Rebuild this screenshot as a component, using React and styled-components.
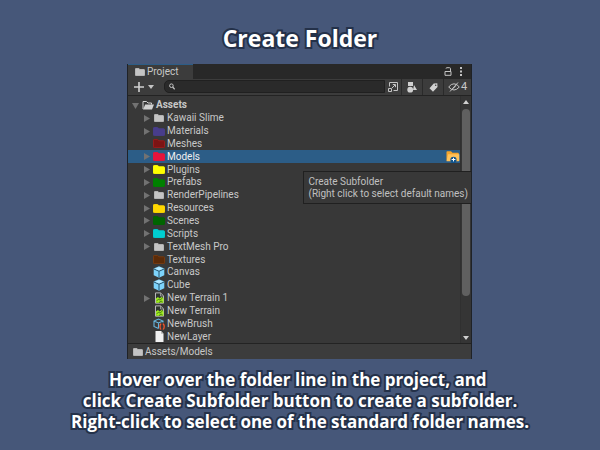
import React from "react";
import styled, { createGlobalStyle, css } from "styled-components";

const GlobalStyle = createGlobalStyle`
  * { box-sizing: border-box; }
  html, body { margin: 0; background: #465779; }
  button, input { font: inherit; color: inherit; margin: 0; padding: 0; border: 0; background: none; }
  ul { list-style: none; margin: 0; padding: 0; }
  svg { display: block; flex: none; }
`;

const outline = css`
  color: #fff;
  font-family: "Open Sans", "Noto Sans", sans-serif;
  font-weight: 700;
  text-align: center;
  -webkit-text-stroke: 4px #243149;
  paint-order: stroke fill;
`;

const Page = styled.main`
  display: flex;
  flex-direction: column;
  min-height: 100vh;
  padding: 22px 0 0;
`;

const Title = styled.h1`
  ${outline}
  margin: 0 0 9px;
  font-size: 23px;
  line-height: 33px;
`;

const Caption = styled.p`
  ${outline}
  margin: 10px 0 0;
  font-size: 17px;
  line-height: 21px;
`;

const Panel = styled.section`
  display: flex;
  flex-direction: column;
  margin: 0 128px 0 127px;
  border: solid #1f2226;
  border-width: 0 1px;
  background: #383838;
  color: #c8c8c8;
  font-family: Roboto, sans-serif;
  font-size: 10px;
  line-height: 12px;
`;

const TabBar = styled.header`
  display: flex;
  align-items: center;
  height: 15px;
  padding-right: 4px;
  background: #282828;
`;

const Tab = styled.button`
  display: flex;
  align-items: center;
  gap: 2px;
  width: 65px;
  height: 15px;
  padding-left: 7px;
  border-top: 1px solid #2c5d87;
  background: #3c3c3c;
`;

const Spacer = styled.span`
  flex: 1;
`;

const IconButton = styled.button`
  display: flex;
  align-items: center;
  justify-content: center;
  width: ${(p) => p.$width || 14}px;
  height: 12px;
`;

const Toolbar = styled.div`
  display: flex;
  align-items: stretch;
  height: 17px;
  border-bottom: 1px solid #232323;
  background: #3c3c3c;
`;

const AddButton = styled.button`
  display: flex;
  align-items: center;
  gap: 4px;
  width: 36px;
  padding-left: 6px;
`;

const SearchBox = styled.label`
  display: flex;
  align-items: center;
  flex: 1;
  height: 13px;
  margin-top: 1px;
  padding-left: 4px;
  border: 1px solid #202020;
  border-radius: 5px 0 0 5px;
  background: #2a2a2a;
`;

const SearchInput = styled.input`
  flex: 1;
  min-width: 0;
  height: 11px;
  outline: none;
`;

const ToolButton = styled.button`
  display: flex;
  align-items: center;
  justify-content: center;
  gap: 1px;
  width: ${(p) => p.$width}px;
  border-left: ${(p) => (p.$divided ? "1px solid #2a2a2a" : "0")};
`;

const Count = styled.span`
  font-size: 11px;
`;

const Body = styled.div`
  position: relative;
  display: flex;
  height: 247px;
`;

const Tree = styled.ul`
  flex: 1;
  display: grid;
  grid-auto-rows: 1fr;
  padding: 3px 0 0;
`;

const Row = styled.li`
  display: flex;
  align-items: center;
  padding: 0 0 0 ${(p) => (p.$root ? 3 : 14)}px;
  background: ${(p) => (p.$selected ? "#2c5d87" : "transparent")};
  color: ${(p) => (p.$selected ? "#f0f0f0" : "#c8c8c8")};
  font-weight: ${(p) => (p.$root ? 700 : 400)};
`;

const Toggle = styled.button`
  display: flex;
  align-items: center;
  justify-content: center;
  width: 9px;
  height: 11px;
`;

const Name = styled.span`
  flex: 1;
  margin-left: 2px;
  white-space: nowrap;
`;

const IconCell = styled.span`
  display: flex;
  align-items: center;
  justify-content: center;
  width: 12px;
  height: 12px;
  margin-left: 2px;
`;

const ScrollTrack = styled.div`
  display: flex;
  flex-direction: column;
  align-items: center;
  width: 11px;
  padding: 2px 0 2px;
  border-left: 1px solid #303030;
  background: #353535;
`;

const ScrollButton = styled.button`
  display: flex;
  align-items: center;
  justify-content: center;
  width: 9px;
  height: 7px;
`;

const Thumb = styled.div`
  width: 8px;
  height: 187px;
  margin: 4px 0 auto;
  border-radius: 4px;
  background: #606060;
`;

const Tooltip = styled.div`
  position: absolute;
  top: 75px;
  right: 0;
  padding: 4px 3px 3px 4px;
  border: 1px solid #202020;
  border-right: 0;
  background: #383838;
  color: #c0c0c0;
  line-height: 12px;
  white-space: nowrap;
`;

const Footer = styled.footer`
  display: flex;
  align-items: center;
  gap: 2px;
  height: 16px;
  padding-left: 5px;
  border-top: 1px solid #232323;
  background: #3c3c3c;
`;

const Folder = ({ color = "#c4c4c4", edge, size = 10 }) => (
  <svg width={size} height={size === 10 ? 8 : 9} viewBox="0 0 12 10" preserveAspectRatio="none">
    <path d="M.5 1.2Q.5.5 1.2.5H4.6L6 2h4.8q.7 0 .7.7v6.1q0 .7-.7.7H1.2q-.7 0-.7-.7z" fill={color} stroke={edge || color} />
  </svg>
);

const OpenFolder = () => (
  <svg width="12" height="10" viewBox="0 0 12 10">
    <path d="M1 9V1.5h3.5L6 3h3.5v1.5" fill="none" stroke="#d0d0d0" />
    <path d="M3.2 4.5H12L10 9.5H1z" fill="#d0d0d0" />
  </svg>
);

const Arrow = ({ open }) => (
  <svg width="7" height="7" viewBox="0 0 7 7">
    <path d={open ? "M0 1h7L3.5 7z" : "M1 0v7L7 3.5z"} fill="#727272" />
  </svg>
);

const Cube = () => (
  <svg width="12" height="12" viewBox="0 0 12 12">
    <path d="M6 .3 11.3 2.6V9.3L6 11.8.7 9.3V2.6z" fill="#7dd3fb" />
    <path d="M1 3 6 5.3 11 3M6 5.3V11.5" fill="none" stroke="#25526c" />
    <path d="M2 2.7 6 1l4 1.7-4 1.6z" fill="#b6e8ff" />
  </svg>
);

const Terrain = () => (
  <svg width="11" height="12" viewBox="0 0 11 12">
    <path d="M1.5 .9H6.5L9.5 3.8V11.2H1.5z" fill="#303630" stroke="#b7b7b7" />
    <path d="M6.5 1V4H9.5" fill="none" stroke="#b7b7b7" strokeWidth=".7" />
    <path d="M2 6.5 4 5l1.5 1.5L7.5 5 9.5 6v4.7H2z" fill="#a0f01c" />
    <path d="m2.5 8.8 2-1.4 1.5.6 2.5-2M5 10.6l2-1.6 1.5.8" fill="none" stroke="#294c16" strokeWidth=".7" />
  </svg>
);

const Brush = () => (
  <svg width="12" height="12" viewBox="0 0 12 12">
    <path d="M5.5 10.5 1 8.5V3L5.5 1 10 3v1.5M1 3l4.5 2L10 3M5.5 5v5.5" fill="none" stroke="#68b5dc" strokeWidth="1.1" />
    <path d="M8.2 6Q6.9 6.2 7 8.7q0 2.4 1.2 2.6M9.8 6q1.4.2 1.4 2.7 0 2.4-1.4 2.6" fill="none" stroke="#f4552c" strokeWidth="1.3" />
  </svg>
);

const Paper = () => (
  <svg width="9" height="11" viewBox="0 0 9 11">
    <path d="M.5 0H6L8.5 2.7V11H.5z" fill="#f1f1f1" />
    <path d="M6 0V2.7H8.5z" fill="#b9b9b9" />
  </svg>
);

const AddFolder = () => (
  <svg width="14" height="12" viewBox="0 0 14 12">
    <path d="M.5 1Q.5.3 1.3.3H5l1.5 1.4H12q.8 0 .8.8V9.3q0 .7-.8.7H1.3q-.8 0-.8-.7z" fill="#f5a52c" />
    <path d="M2 3.3H13.3V9.5q0 .8-.8.8H.6z" fill="#ffc35c" />
    <circle cx="7.5" cy="8.9" r="3.1" fill="#11548c" />
    <path d="M5.6 8.5h3.8M7.5 6.8v3.6" stroke="#fff" />
  </svg>
);

const glyphs = { cube: Cube, terrain: Terrain, brush: Brush, paper: Paper };

const items = [
  { name: "Kawaii Slime", arrow: true, small: true },
  { name: "Materials", arrow: true, color: "#483d8b" },
  { name: "Meshes", color: "#7c1414", edge: "#9c1a1a" },
  { name: "Models", arrow: true, color: "#e6143c", selected: true },
  { name: "Plugins", arrow: true, color: "#ffff00" },
  { name: "Prefabs", arrow: true, color: "#008000" },
  { name: "RenderPipelines", arrow: true, small: true },
  { name: "Resources", arrow: true, color: "#ffd700" },
  { name: "Scenes", arrow: true, color: "#006400" },
  { name: "Scripts", arrow: true, color: "#00ced1" },
  { name: "TextMesh Pro", arrow: true, small: true },
  { name: "Textures", color: "#5b2b08", edge: "#783b10" },
  { name: "Canvas", glyph: "cube" },
  { name: "Cube", glyph: "cube" },
  { name: "New Terrain 1", arrow: true, glyph: "terrain" },
  { name: "New Terrain", glyph: "terrain" },
  { name: "NewBrush", glyph: "brush" },
  { name: "NewLayer", glyph: "paper" },
];

function TreeItem({ item }) {
  const Glyph = glyphs[item.glyph];
  return (
    <Row role="treeitem" $selected={item.selected} aria-selected={!!item.selected}>
      {item.arrow ? (
        <Toggle aria-label={`Expand ${item.name}`}><Arrow /></Toggle>
      ) : (
        <Toggle as="span" />
      )}
      <IconCell>
        {Glyph ? <Glyph /> : <Folder color={item.color} edge={item.edge} size={item.small ? 10 : 12} />}
      </IconCell>
      <Name>{item.name}</Name>
      {item.selected && (
        <IconButton aria-label="Create Subfolder"><AddFolder /></IconButton>
      )}
    </Row>
  );
}

export default function App() {
  return (
    <>
      <GlobalStyle />
      <Page>
        <Title>Create Folder</Title>
        <Panel>
          <TabBar>
            <Tab><Folder />Project</Tab>
            <Spacer />
            <IconButton aria-label="Lock">
              <svg width="8" height="9" viewBox="0 0 8 9" fill="none" stroke="#c4c4c4">
                <path d="M1 4.5h6v3.8H1zM2 1.5Q2 .7 3 .7h2.5q1 0 1 1v2.8" />
              </svg>
            </IconButton>
            <IconButton aria-label="Panel menu" $width={12}>
              <svg width="2" height="9" viewBox="0 0 2 9" fill="#c4c4c4">
                <path d="M0 0h2v2H0zM0 3.5h2v2H0zM0 7h2v2H0z" />
              </svg>
            </IconButton>
          </TabBar>
          <Toolbar>
            <AddButton aria-label="Add asset">
              <svg width="10" height="10" viewBox="0 0 10 10">
                <path d="M0 5h10M5 0v10" stroke="#d0d0d0" strokeWidth="1.6" />
              </svg>
              <svg width="6" height="4" viewBox="0 0 6 4"><path d="M0 0h6L3 4z" fill="#c4c4c4" /></svg>
            </AddButton>
            <SearchBox>
              <svg width="6" height="7" viewBox="0 0 6 7" fill="none" stroke="#c4c4c4">
                <circle cx="2.4" cy="2.7" r="1.8" /><path d="m3.7 4 2 2.3" strokeWidth="1.3" />
              </svg>
              <SearchInput type="text" aria-label="Search project" />
            </SearchBox>
            <ToolButton aria-label="Open search window" $width={16}>
              <svg width="10" height="10" viewBox="0 0 10 10" fill="none" stroke="#c4c4c4">
                <path d="M1.5 4.5V.5h8v8H5.5M.5 6.5h3v3h-3zM4 6l3-3M4.8 2.5H7.5V5.2" />
              </svg>
            </ToolButton>
            <ToolButton aria-label="Search by type" $width={21} $divided>
              <svg width="10" height="11" viewBox="0 0 10 11" fill="#d0d0d0">
                <path d="M1 0h5v4H1zM7 3 10 8H6z" /><circle cx="3.2" cy="7.7" r="2.9" />
              </svg>
            </ToolButton>
            <ToolButton aria-label="Search by label" $width={21} $divided>
              <svg width="9" height="9" viewBox="0 0 9 9">
                <path fillRule="evenodd" d="M4.7.6 8.3.3 8.5 4 4 8.8.5 5.2zM6.7 1.4a.8.8 0 1 0 0 1.6.8.8 0 0 0 0-1.6z" fill="#d0d0d0" />
              </svg>
            </ToolButton>
            <ToolButton aria-label="Hidden packages: 4" $width={28} $divided>
              <svg width="12" height="10" viewBox="0 0 12 10" fill="none" stroke="#c4c4c4">
                <path d="M.7 5Q3.2 1.7 6 1.8 9 1.8 11.3 5 8.7 8 6 8 3.2 8 .7 5zM2 9.5 10 .5M5 6.7 8 3.5" />
              </svg>
              <Count>4</Count>
            </ToolButton>
          </Toolbar>
          <Body>
            <Tree role="tree" aria-label="Project files">
              <Row role="treeitem" aria-expanded="true" $root>
                <Toggle aria-label="Collapse Assets"><Arrow open /></Toggle>
                <IconCell><OpenFolder /></IconCell>
                <Name>Assets</Name>
              </Row>
              {items.map((item) => <TreeItem key={item.name} item={item} />)}
            </Tree>
            <ScrollTrack>
              <ScrollButton aria-label="Scroll up">
                <svg width="6" height="4" viewBox="0 0 6 4"><path d="M0 4h6L3 0z" fill="#d0d0d0" /></svg>
              </ScrollButton>
              <Thumb />
              <ScrollButton aria-label="Scroll down">
                <svg width="6" height="4" viewBox="0 0 6 4"><path d="M0 0h6L3 4z" fill="#d0d0d0" /></svg>
              </ScrollButton>
            </ScrollTrack>
            <Tooltip role="tooltip">
              Create Subfolder
              <br />
              (Right click to select default names)
            </Tooltip>
          </Body>
          <Footer><Folder />Assets/Models</Footer>
        </Panel>
        <Caption>
          Hover over the folder line in the project, and&nbsp;
          <br />
          click Create Subfolder button to create a subfolder.
          <br />
          Right-click to select one of the standard folder names.
        </Caption>
      </Page>
    </>
  );
}
